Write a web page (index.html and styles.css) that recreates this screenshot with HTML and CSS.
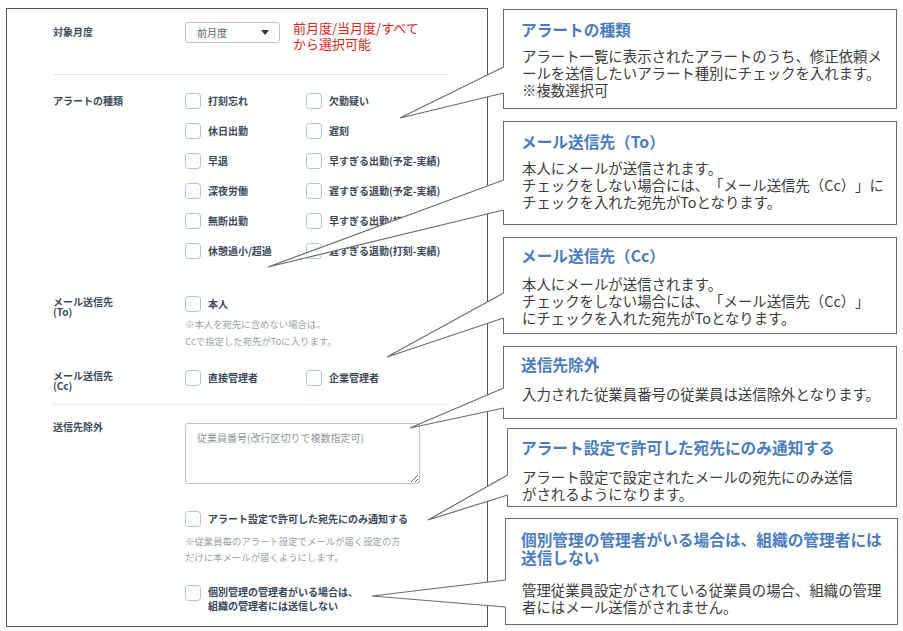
FILE: index.html
```html
<!DOCTYPE html>
<html lang="ja">
<head>
<meta charset="utf-8">
<title>アラートメール設定</title>
<link rel="stylesheet" href="styles.css">
</head>
<body>
<div class="page">
  <div class="panel">
    <div class="row row-month">
      <div class="label lbl-month">対象月度</div>
      <div class="ctrl ctrl-month">
        <div class="select">
          <span class="select-text">前月度</span>
          <svg class="caret" width="8" height="5" viewBox="0 0 8 5"><path d="M0 0H8L4 5Z" fill="#333"/></svg>
        </div>
        <div class="annot">前月度/当月度/すべて<br>から選択可能</div>
      </div>
    </div>
    <div class="divider div-1"></div>
    <div class="row row-alert">
      <div class="label lbl-alert">アラートの種類</div>
      <div class="ctrl check-grid">
        <label class="check"><span class="box"></span><span class="ctext">打刻忘れ</span></label>
        <label class="check"><span class="box"></span><span class="ctext">欠勤疑い</span></label>
        <label class="check"><span class="box"></span><span class="ctext">休日出勤</span></label>
        <label class="check"><span class="box"></span><span class="ctext">遅刻</span></label>
        <label class="check"><span class="box"></span><span class="ctext">早退</span></label>
        <label class="check"><span class="box"></span><span class="ctext">早すぎる出勤(予定-実績)</span></label>
        <label class="check"><span class="box"></span><span class="ctext">深夜労働</span></label>
        <label class="check"><span class="box"></span><span class="ctext">遅すぎる退勤(予定-実績)</span></label>
        <label class="check"><span class="box"></span><span class="ctext">無断出勤</span></label>
        <label class="check"><span class="box"></span><span class="ctext">早すぎる出勤(打刻-実績)</span></label>
        <label class="check"><span class="box"></span><span class="ctext">休憩過小/超過</span></label>
        <label class="check"><span class="box"></span><span class="ctext">遅すぎる退勤(打刻-実績)</span></label>
      </div>
    </div>
    <div class="row row-to">
      <div class="label label-2l">メール送信先<br>(To)</div>
      <div class="ctrl">
        <label class="check check-inline"><span class="box"></span><span class="ctext">本人</span></label>
        <div class="note note-to">※本人を宛先に含めない場合は、<br>Ccで指定した宛先がToに入ります。</div>
      </div>
    </div>
    <div class="row row-cc">
      <div class="label label-2l">メール送信先<br>(Cc)</div>
      <div class="ctrl cc-list">
        <label class="check check-cc1"><span class="box"></span><span class="ctext">直接管理者</span></label>
        <label class="check"><span class="box"></span><span class="ctext">企業管理者</span></label>
      </div>
    </div>
    <div class="divider div-2"></div>
    <div class="row row-ex">
      <div class="label lbl-ex">送信先除外</div>
      <div class="ctrl">
        <textarea class="textarea" placeholder="従業員番号(改行区切りで複数指定可)"></textarea>
        <label class="check check-notify"><span class="box"></span><span class="ctext">アラート設定で許可した宛先にのみ通知する</span></label>
        <div class="note note-notify">※従業員毎のアラート設定でメールが届く設定の方<br>だけに本メールが届くようにします。</div>
        <label class="check check-org"><span class="box"></span><span class="ctext ctext-2l">個別管理の管理者がいる場合は、<br>組織の管理者には送信しない</span></label>
      </div>
    </div>
  </div>

  <div class="callouts">
    <div class="callout c1">
      <div class="c-title">アラートの種類</div>
      <div class="c-body">アラート一覧に表示されたアラートのうち、修正依頼メ<br>ールを送信したいアラート種別にチェックを入れます。<br>※複数選択可</div>
    </div>
    <div class="callout c2">
      <div class="c-title">メール送信先（To）</div>
      <div class="c-body">本人にメールが送信されます。<br>チェックをしない場合には、「メール送信先（Cc）」に<br>チェックを入れた宛先がToとなります。</div>
    </div>
    <div class="callout c3">
      <div class="c-title">メール送信先（Cc）</div>
      <div class="c-body">本人にメールが送信されます。<br>チェックをしない場合には、「メール送信先（Cc）」<br>にチェックを入れた宛先がToとなります。</div>
    </div>
    <div class="callout c4">
      <div class="c-title">送信先除外</div>
      <div class="c-body">入力された従業員番号の従業員は送信除外となります。</div>
    </div>
    <div class="callout c5">
      <div class="c-title">アラート設定で許可した宛先にのみ通知する</div>
      <div class="c-body">アラート設定で設定されたメールの宛先にのみ送信<br>がされるようになります。</div>
    </div>
    <div class="callout c6">
      <div class="c-title">個別管理の管理者がいる場合は、組織の管理者には<br>送信しない</div>
      <div class="c-body">管理従業員設定がされている従業員の場合、組織の管理<br>者にはメール送信がされません。</div>
    </div>
  </div>
</div>

<svg class="wedges" width="903" height="631" viewBox="0 0 903 631">
  <g fill="#fff" stroke="none">
    <polygon points="400,118 503.6,67 506,67 506,93 503.6,93"/>
    <polygon points="268,267 503.6,180 506,180 506,210 503.6,210"/>
    <polygon points="387,357 503.6,293 506,293 506,318 503.6,318"/>
    <polygon points="410,428 503.6,388 506,388 506,408 503.6,408"/>
    <polygon points="428,520 507.6,475 510,475 510,495 507.6,495"/>
    <polygon points="372,596 505.6,580 508,580 508,607 505.6,607"/>
  </g>
  <g fill="none" stroke="#6b6b6b" stroke-width="1.2">
    <polyline points="503.6,67 400,118 503.6,93"/>
    <polyline points="503.6,180 268,267 503.6,210"/>
    <polyline points="503.6,293 387,357 503.6,318"/>
    <polyline points="503.6,388 410,428 503.6,408"/>
    <polyline points="507.6,475 428,520 507.6,495"/>
    <polyline points="505.6,580 372,596 505.6,607"/>
  </g>
</svg>
</body>
</html>
```

FILE: styles.css
```css
html, body {
  margin: 0;
  padding: 0;
  background: #fff;
}
body {
  width: 903px;
  height: 631px;
  position: relative;
  overflow: hidden;
  font-family: "Noto Sans CJK JP", "Noto Sans", sans-serif;
  text-spacing-trim: space-all;
}
.page {
  display: flex;
  align-items: flex-start;
  padding: 8px 0 0 6px;
}

/* ---------- left form panel ---------- */
.panel {
  width: 482px;
  height: 619px;
  box-sizing: border-box;
  border: 1.5px solid #555;
  padding: 10.5px 0 0 46px;
  display: flex;
  flex-direction: column;
  color: #3a4859;
}
.row {
  display: grid;
  grid-template-columns: 132px 1fr;
  align-items: start;
}
.label {
  font-size: 10px;
  line-height: 14px;
  font-weight: 700;
  color: #3d4c5d;
  white-space: nowrap;
}
.label-2l {
  line-height: 10px;
  margin-top: 1px;
}
.lbl-month { margin-top: 5px; }
.ctrl-month {
  display: flex;
  align-items: flex-start;
}
.select {
  margin-top: 2px;
  width: 95px;
  height: 21px;
  box-sizing: border-box;
  border: 1px solid #b5c5d5;
  border-radius: 3px;
  display: flex;
  align-items: center;
  justify-content: space-between;
  padding: 0 10px 0 11px;
}
.select-text {
  font-size: 10px;
  color: #555e68;
}
.caret { display: block; }
.annot {
  margin-left: 13px;
  font-size: 13px;
  line-height: 16px;
  color: #e0251b;
  white-space: nowrap;
}
.divider {
  width: 396px;
  height: 1px;
  background: #e2e7ec;
}
.div-1 { margin-top: 22px; }
.div-2 { margin-top: 13px; }

.row-alert { margin-top: 11px; }
.lbl-alert { margin-top: 8px; }
.check-grid {
  display: grid;
  grid-template-columns: 121px 1fr;
  grid-auto-rows: 30px;
  align-items: center;
}
.check {
  display: flex;
  align-items: center;
  white-space: nowrap;
}
.box {
  flex: none;
  width: 16px;
  height: 16px;
  box-sizing: border-box;
  border: 1.5px solid #adc2d7;
  border-radius: 3.5px;
  background: #fff;
  margin-right: 7px;
}
.ctext {
  font-size: 10px;
  line-height: 14px;
  font-weight: 700;
  color: #3a4859;
}
.ctext-2l { line-height: 14px; }

.row-to { margin-top: 30px; }
.note {
  font-size: 9.4px;
  color: #9a9fa5;
  white-space: nowrap;
}
.note-to {
  margin-top: 4.5px;
  line-height: 17px;
}
.row-cc { margin-top: 20px; }
.cc-list {
  display: flex;
}
.check-cc1 { width: 121px; }

.row-ex { margin-top: 15px; }
.lbl-ex { margin-top: 0; }
.textarea {
  display: block;
  margin: 3px 0 0 0;
  width: 235px;
  height: 61px;
  box-sizing: border-box;
  border: 1px solid #b5c5d5;
  border-radius: 3px;
  padding: 7px 11px;
  font-family: "Noto Sans CJK JP", sans-serif;
  font-size: 10px;
  line-height: 14px;
  resize: vertical;
  outline: none;
}
.textarea::placeholder { color: #8f959c; }
.check-notify { margin-top: 27px; }
.note-notify {
  margin-top: 6px;
  line-height: 16px;
}
.check-org {
  margin-top: 20px;
  align-items: flex-start;
}

/* ---------- right callouts ---------- */
.callouts {
  margin-left: 15px;
  margin-top: 1px;
  display: flex;
  flex-direction: column;
}
.callout {
  width: 394px;
  box-sizing: border-box;
  border: 1.3px solid #6b6b6b;
  background: #fff;
  padding: 11px 0 0 17px;
  white-space: nowrap;
}
.c-title {
  font-size: 15.7px;
  line-height: 18px;
  font-weight: 700;
  color: #4a7cc0;
}
.c-body {
  margin-top: 8px;
  margin-left: 1px;
  font-size: 14.4px;
  line-height: 17px;
  color: #3c3c3c;
}
.c1 { height: 100px; }
.c2 { height: 104px; margin-top: 12px; }
.c3 { height: 97px; margin-top: 12px; padding-top: 9px; }
.c3 .c-body { margin-top: 10px; }
.c4 { height: 73px; margin-top: 12px; padding-top: 9px; }
.c4 .c-body { margin-top: 11px; }
.c5 { height: 79px; width: 390px; margin-top: 9px; margin-left: 4px; padding-left: 13px; padding-top: 10px; }
.c5 .c-body { margin-top: 11px; }
.c6 { height: 107px; width: 393px; margin-top: 11px; margin-left: 2px; padding-left: 15px; padding-top: 12px; }
.c6 .c-body { margin-top: 14px; }

/* ---------- pointer wedges (overlay) ---------- */
.wedges {
  position: absolute;
  left: 0;
  top: 0;
  pointer-events: none;
}
```
